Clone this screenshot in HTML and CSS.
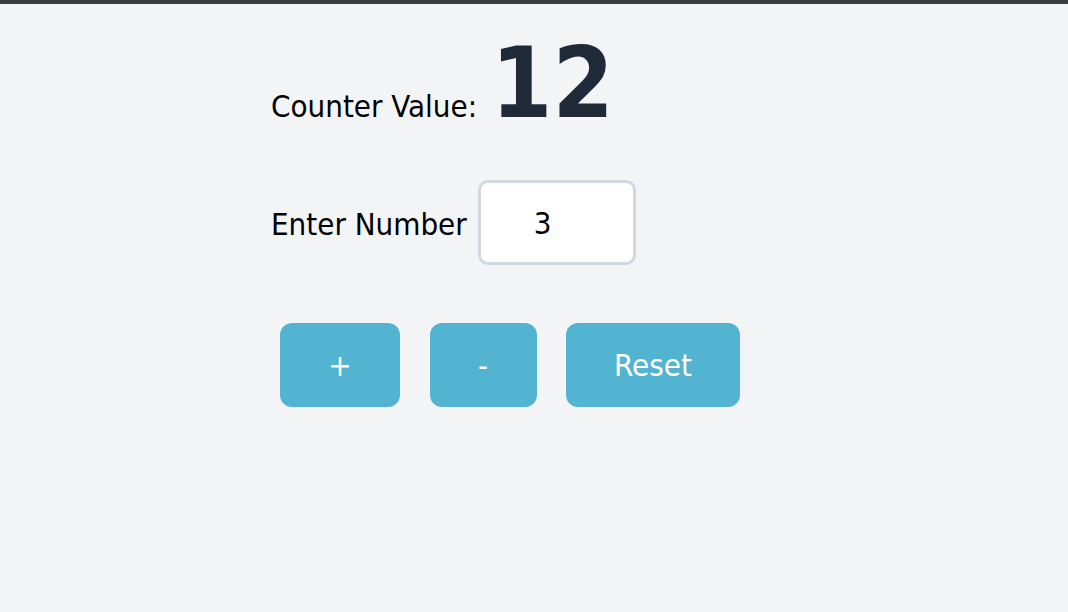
FILE: index.html
```html
<!DOCTYPE html>
<html>
<head>
<meta charset="utf-8">
<link rel="stylesheet" href="styles.css">
</head>
<body>
<main class="app">
  <div class="counter">
    <span class="counter-label">Counter Value:</span>
    <span class="counter-value">12</span>
  </div>
  <div class="input-row">
    <label class="input-label" for="num">Enter Number</label>
    <input id="num" class="num-input" type="text" value="3">
  </div>
  <div class="buttons">
    <button class="btn btn-plus">+</button>
    <button class="btn btn-minus">-</button>
    <button class="btn btn-reset">Reset</button>
  </div>
</main>
</body>
</html>
```
FILE: styles.css
```css
html, body {
  margin: 0;
  padding: 0;
}
body {
  background: #f3f4f6;
  border-top: 4px solid #3b3b3b;
  height: 608px;
  font-family: "DejaVu Sans Condensed", "DejaVu Sans", sans-serif;
  color: #000;
}
.app {
  padding: 30px 0 0 271px;
  display: flex;
  flex-direction: column;
}
.counter {
  display: flex;
  align-items: baseline;
  gap: 14px;
  height: 90px;
}
.counter-label {
  font-size: 31px;
}
.counter-value {
  font-size: 98px;
  font-weight: bold;
  color: #1f2937;
  line-height: 1;
}
.input-row {
  display: flex;
  align-items: center;
  gap: 11px;
  margin-top: 56px;
}
.input-label {
  font-size: 31px;
  padding-top: 3px;
}
.num-input {
  box-sizing: border-box;
  width: 158px;
  height: 85px;
  border: 3px solid #cfd8e3;
  border-radius: 10px;
  background: #fff;
  font-family: inherit;
  font-size: 31px;
  color: #000;
  padding: 0 0 0 53px;
  outline: none;
}
.buttons {
  display: flex;
  gap: 29.5px;
  margin-top: 58px;
  padding-left: 9px;
}
.btn {
  height: 84px;
  border: none;
  border-radius: 12px;
  background: #53b4d2;
  color: #fff;
  font-family: inherit;
  font-size: 31px;
  padding: 0;
}
.btn-plus { width: 120px; }
.btn-minus { width: 107px; }
.btn-reset { width: 174px; }
```
